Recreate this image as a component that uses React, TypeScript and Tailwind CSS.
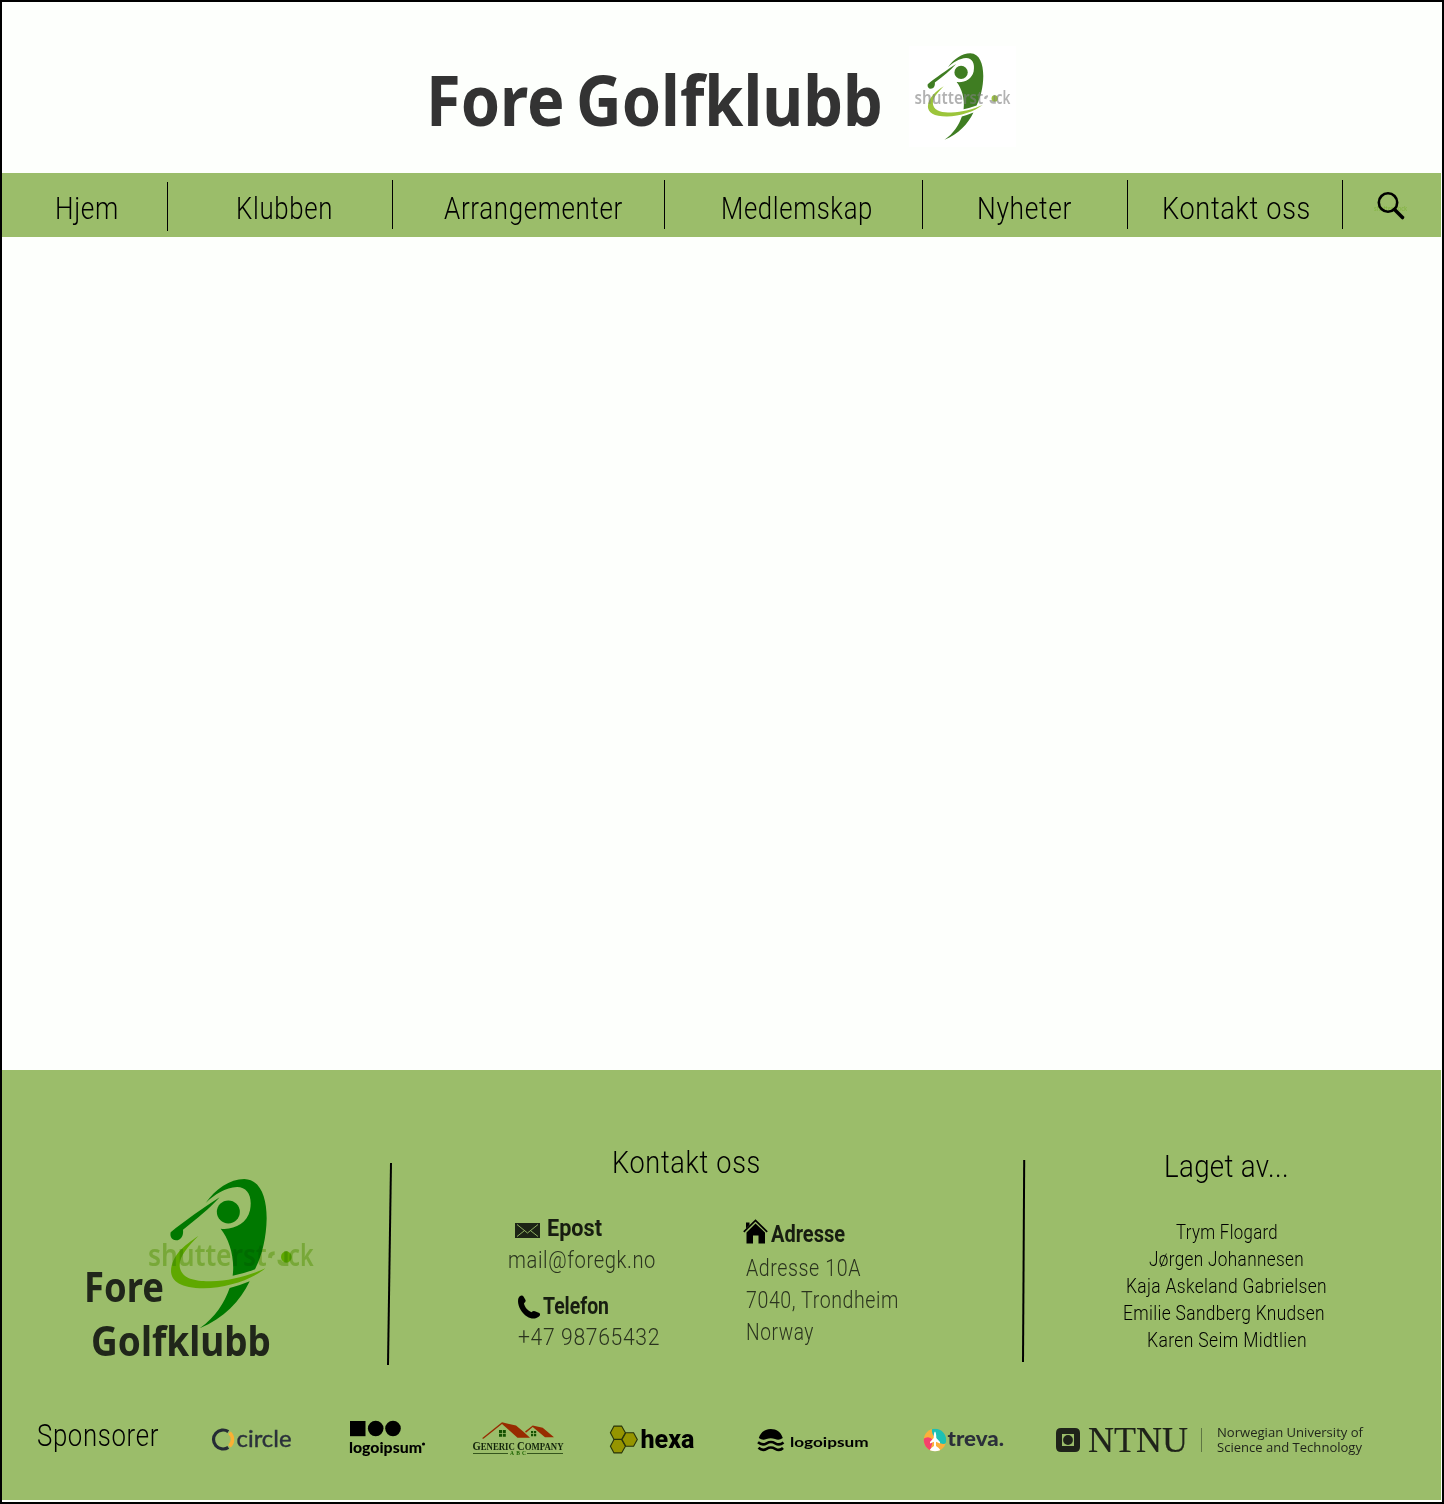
import { useLayoutEffect, useRef, useState, type ReactNode } from "react";

/** One line of text, condensed or widened to fill the width given by its classes. */
function Fit({ className, children }: { className: string; children: ReactNode }) {
  const outer = useRef<HTMLSpanElement>(null);
  const inner = useRef<HTMLSpanElement>(null);
  const [scale, setScale] = useState(1);
  useLayoutEffect(() => {
    if (outer.current && inner.current) {
      setScale(outer.current.clientWidth / inner.current.getBoundingClientRect().width);
    }
  }, []);
  return (
    <span ref={outer} className={`block shrink-0 whitespace-nowrap ${className}`}>
      <span ref={inner} className="inline-block origin-left" style={{ transform: `scaleX(${scale})` }}>
        {children}
      </span>
    </span>
  );
}

type GolferProps = { className: string; body: string; swing: string; markClass: string };

function Golfer({ className, body, swing, markClass }: GolferProps) {
  return (
    <svg viewBox="260 80 500 460" className={`overflow-visible ${className}`}>
      <g fill={body}>
        <path d="M436 158C466 116 508 86 552 86C600 88 619 140 619 204C618 262 606 314 584 357Q550 370 517 376C524 322 507 268 481 235C520 240 560 220 569 180C577 138 562 110 530 110C496 112 462 132 436 158Z" />
        <circle cx="504" cy="185" r="34.500" />
        <path d="M478 141C448 174 414 202 368 238C370 256 362 270 347 270C334 269 328 258 331 246C370 214 430 172 478 141Z" />
        <path d="M508 413Q540 405 568 393C540 452 490 505 418 534C466 500 492 458 508 413Z" />
      </g>
      <path
        fill={swing}
        d="M414 257C380 292 352 322 359 354C368 388 410 393 452 393C510 391 566 376 615 354C574 388 500 412 430 414C362 414 332 392 332 362C334 316 370 286 414 257Z"
      />
      <ellipse cx="678" cy="320" rx="16" ry="17" fill={swing} />
      <g className={markClass} fontFamily="Noto Sans, sans-serif" fontWeight="600" fontSize="92">
        <text x="263" y="347" textLength="356" lengthAdjust="spacingAndGlyphs">
          shutterst
        </text>
        <text x="684" y="347" textLength="76" lengthAdjust="spacingAndGlyphs">
          ck
        </text>
        <path d="M623 322Q623 303 643 303V314Q635 314 635 324Z" />
        <path d="M651 328Q652 347 672 347H684V335H674Q664 335 663 328Z" />
        <rect x="672" y="302" width="10" height="34" />
      </g>
    </svg>
  );
}

function NavItem({ cell, text, label, bar = "mt-[7px]" }: { cell: string; text: string; label: string; bar?: string }) {
  return (
    <li className={`flex h-full shrink-0 justify-between ${cell}`}>
      <a href="#" className="mt-[15px] block">
        <Fit className={`text-[32px] font-[360] leading-10 tracking-[0.025em] ${text}`}>{label}</Fit>
      </a>
      <span className={`h-[49px] w-px bg-black ${bar}`} />
    </li>
  );
}

function Circle() {
  return (
    <svg viewBox="212 1427 80 24" className="ml-[53px] mt-[27px] h-6 w-20 shrink-0 overflow-visible">
      <path d="M228.300 1431.600A9.500 9.500 0 1 0 228.300 1447.400" fill="none" stroke="#252b35" strokeWidth="3.200" />
      <path d="M229.600 1432.700A9.500 9.500 0 0 1 229.600 1446.300" fill="none" stroke="#fbb034" strokeWidth="3.600" />
      <text x="236.500" y="1447" textLength="55" lengthAdjust="spacingAndGlyphs" fill="#2b313b" stroke="#2b313b" strokeWidth="0.400" fontFamily="Lato, sans-serif" fontSize="24">
        circle
      </text>
    </svg>
  );
}

function LogoipsumBlocks() {
  return (
    <svg viewBox="349 1420 77 38" className="ml-[57px] mt-5 h-[38px] w-[77px] shrink-0 overflow-visible">
      <rect x="350" y="1421" width="15.500" height="15.200" />
      <circle cx="375.700" cy="1428.500" r="7.800" />
      <circle cx="393" cy="1428.500" r="7.800" />
      <text x="349" y="1453" textLength="73" lengthAdjust="spacingAndGlyphs" fontFamily="Lato, sans-serif" fontWeight="900" fontSize="14.500">
        logoipsum
      </text>
      <circle cx="423.500" cy="1444" r="1.600" />
    </svg>
  );
}

function GenericCompany() {
  return (
    <svg viewBox="472 1421 92 36" className="ml-[46px] mt-[21px] h-9 w-[92px] shrink-0 overflow-visible">
      <g fill="#982b00">
        <path d="M502 1422.300L516 1425.500L523.500 1431.800L530 1437.700H517.500L502 1424L483.500 1438.800L482 1438.300Z" />
        <path d="M532.700 1425.500L542.700 1427.800L554 1437.200H545L532.700 1427L526 1432.800L525 1431.600Z" />
      </g>
      <path d="M499 1430h3v3h-3zM502.800 1430h3v3h-3zM499 1433.800h3v3h-3zM502.800 1433.800h3v3h-3zM531 1431h2.200v2.200h-2.200zM534 1431h2.200v2.200h-2.200zM531 1434h2.200v2.200h-2.200zM534 1434h2.200v2.200h-2.200z" fill="#145200" />
      <g fontFamily="Liberation Serif, serif" fill="#12240a">
        <text x="472.500" y="1449.500" textLength="91" lengthAdjust="spacingAndGlyphs" fontWeight="700" fontSize="9.500">
          <tspan fontSize="11.500">G</tspan>ENERIC <tspan fontSize="11.500">C</tspan>OMPANY
        </text>
        <text x="510" y="1455.200" textLength="16" fontSize="5.500" fill="#1d6200" fontWeight="700">
          ABC
        </text>
      </g>
      <path d="M473 1453.500H508M527 1453.500H563" stroke="#35551d" strokeWidth="1" />
    </svg>
  );
}

function Hexa() {
  return (
    <svg viewBox="609 1424 86 32" className="ml-[45px] mt-6 h-8 w-[86px] shrink-0 overflow-visible">
      <g fill="#959500" stroke="#26330a" strokeWidth="1.100">
        <path d="M610.400 1432.800L614 1426.100H621.600L625.400 1432.800L621.600 1439.400H614Z" />
        <path d="M610.400 1446.200L614 1439.500H621.600L625.400 1446.200L621.600 1452.900H614Z" />
        <path d="M622 1439.500L625.800 1432.800H633.600L637.300 1439.500L633.600 1446.200H625.800Z" />
      </g>
      <text x="640.500" y="1448" textLength="54" lengthAdjust="spacingAndGlyphs" fontFamily="Roboto, sans-serif" fontWeight="800" fontSize="25.500">
        hexa
      </text>
    </svg>
  );
}

function LogoipsumWaves() {
  return (
    <svg viewBox="757 1428 112 26" className="ml-[62px] mt-7 h-[26px] w-28 shrink-0 overflow-visible">
      <path d="M758.800 1438C761 1432 765 1429 770.800 1429C776.500 1429 781 1432 782.800 1438Q779 1441 775 1439Q770.800 1437.500 766.500 1439Q762.500 1441 758.800 1438Z" />
      <g fill="none" stroke="#000" strokeWidth="2.600">
        <path d="M758 1442.300Q762.300 1445.800 766.600 1443.300T775.200 1443.300T783.500 1442.500" />
        <path d="M758.500 1447.800Q762.500 1451.300 766.600 1448.800T775.200 1448.800T783 1448" />
      </g>
      <text x="790" y="1446.500" textLength="78.500" lengthAdjust="spacingAndGlyphs" fontFamily="Lato, sans-serif" fontWeight="700" fontSize="14">
        logoipsum
      </text>
    </svg>
  );
}

function Treva() {
  return (
    <svg viewBox="923 1428 82 24" className="ml-[54px] mt-7 h-6 w-[82px] shrink-0 overflow-visible">
      <clipPath id="treva-disc">
        <circle cx="935" cy="1440" r="11.200" />
      </clipPath>
      <g clipPath="url(#treva-disc)">
        <rect x="923" y="1428" width="24" height="24" fill="#fbb03b" />
        <path d="M932 1428H947V1443Q940 1446 936 1439Q931 1434 932 1428Z" fill="#1cc0b4" />
        <path d="M923 1439Q929 1435 933 1440L930 1452H923Z" fill="#f4436c" />
        <path d="M935 1431.500Q936.300 1432.500 936.300 1438L940 1442V1443.500L936 1441.800V1446Q939 1447.500 942 1452H928Q931 1447.500 934 1446V1441.800L930 1443.500V1442L933.700 1438Q933.700 1432.500 935 1431.500Z" fill="#fff" />
      </g>
      <text x="947.500" y="1446" textLength="56.500" lengthAdjust="spacingAndGlyphs" fill="#2b2f3a" fontFamily="Lato, sans-serif" fontWeight="900" fontSize="20">
        treva.
      </text>
    </svg>
  );
}

function Ntnu() {
  return (
    <div className="ml-[51px] mt-[23px] flex text-[#1f231a]">
      <svg viewBox="0 0 24 24" className="mt-[5px] size-6 shrink-0" fill="currentColor">
        <path fillRule="evenodd" d="M5 0H19Q24 0 24 5V19Q24 24 19 24H5Q0 24 0 19V5Q0 0 5 0ZM6 6V18H18V6Z" />
        <circle cx="12" cy="12" r="4.900" />
      </svg>
      <Fit className="ml-2 -mt-[3px] h-10 w-[100px] font-['Liberation_Serif',serif] text-[36px] leading-10 [-webkit-text-stroke:0.2px]">NTNU</Fit>
      <span className="ml-[13px] mt-[5px] h-6 w-px bg-[#5f7643]" />
      <div className="ml-[15px] mt-[3px] font-['Open_Sans',sans-serif] text-[12.500px] leading-[14.500px]">
        <Fit className="w-[146px]">Norwegian University of</Fit>
        <Fit className="w-[145px]">Science and Technology</Fit>
      </div>
    </div>
  );
}

export default function App() {
  return (
    <div className="flex h-[1504px] w-[1444px] flex-col overflow-hidden border-2 border-black bg-[#fdfffc] pr-px font-['Roboto',sans-serif] text-black">
      <header className="flex h-[171px] shrink-0 items-start pl-[424px]">
        <h1 className="mt-[57px]">
          <Fit className="w-[457px] font-['Noto_Sans',sans-serif] text-[70px] font-bold leading-[80px] text-[#333] [word-spacing:-0.08em]">Fore Golfklubb</Fit>
        </h1>
        <div className="ml-[26px] mt-11 bg-white px-[5px] py-1.5">
          <Golfer className="h-[89px] w-[96.500px]" body="#3f7d22" swing="#9cc53b" markClass="fill-[#808080] opacity-60" />
        </div>
      </header>

      <nav className="h-16 shrink-0 bg-[#9bbd6a]">
        <ul className="flex h-full">
          <NavItem cell="w-[166px] pl-[53px]" text="w-[64px]" label="Hjem" bar="mt-[9px]" />
          <NavItem cell="w-[225px] pl-[68px]" text="w-[97px]" label="Klubben" />
          <NavItem cell="w-[272px] pl-[51px]" text="w-[179px]" label="Arrangementer" />
          <NavItem cell="w-[258px] pl-[56px]" text="w-[152px]" label="Medlemskap" />
          <NavItem cell="w-[205px] pl-[54px]" text="w-[95px]" label="Nyheter" />
          <NavItem cell="w-[215px] pl-[34px]" text="w-[149px]" label="Kontakt oss" />
          <li className="ml-[31px] mt-[18px]">
            <svg viewBox="0 0 34 30" className="h-[30px] w-[34px] overflow-visible">
              <text x="0" y="20" textLength="33" lengthAdjust="spacingAndGlyphs" fill="#86b545" fontFamily="Open Sans, sans-serif" fontWeight="600" fontSize="7">
                shutterstock
              </text>
              <circle cx="14" cy="11.500" r="9.200" fill="none" stroke="#000" strokeWidth="2.600" />
              <path d="M20.500 18.500L28.500 26.500" stroke="#000" strokeWidth="3.600" strokeLinecap="round" />
            </svg>
          </li>
        </ul>
      </nav>

      <main className="h-[833px] shrink-0" />

      <footer className="h-[430px] shrink-0 bg-[#9bbd6a]">
        <div className="flex h-[330px] items-start">
          <section className="relative w-[384px] pl-[82px] pt-[189px] font-['Noto_Sans',sans-serif] text-[41px] font-bold leading-[54px] text-[#20261a]">
            <Golfer
              className="absolute left-[144.700px] top-[106.700px] h-[153.300px] w-[166.700px]"
              body="#007800"
              swing="#5fa800"
              markClass="fill-[#c6e387] mix-blend-multiply"
            />
            <Fit className="relative w-[80px]">Fore</Fit>
            <Fit className="relative ml-[7px] w-[180px]">Golfklubb</Fit>
          </section>

          <svg viewBox="0 0 6 202" className="mt-[93px] h-[202px] w-1.5 shrink-0">
            <path d="M5 0L2 202" stroke="#000" strokeWidth="2" />
          </svg>

          <section className="w-[629px] pt-[72px]">
            <h2 className="pl-[220px]">
              <Fit className="w-[149px] text-[32px] font-[360] leading-10 tracking-[0.025em]">Kontakt oss</Fit>
            </h2>
            <div className="flex text-2xl leading-8 text-[#2a331e]">
              <div className="w-[234px] pl-[115px] pt-[30px]">
                <div className="flex pl-2">
                  <svg viewBox="0 0 25 15" className="mt-[11px] h-[15px] w-[25px] shrink-0">
                    <rect width="25" height="15" fill="#1c2415" />
                    <path d="M2 1.500L12.500 10L23 1.500M2 13.500L9.500 7.600M23 13.500L15.500 7.600" fill="none" stroke="#9bbd6a" strokeWidth="0.900" />
                  </svg>
                  <Fit className="ml-[7px] w-[55px] font-bold text-[#171d10]">Epost</Fit>
                </div>
                <Fit className="ml-px w-[148px] font-[330] tracking-[0.03em]">mail@foregk.no</Fit>
                <div className="mt-[14px] flex pl-[11px]">
                  <svg viewBox="0 0 22 24" className="mt-[5px] h-6 w-[22px] shrink-0">
                    <path d="M1.500 1.500Q4-.5 5.500 1.500L7.500 5Q8.200 6.800 6 8.300C6.500 12 10 16 13.500 17.200Q15 15.600 17 16.200L21.300 18Q23 19.500 21 21.500C18 24 13.500 24.500 9 21.500C3 17.500-1.500 9 .500 3Z" />
                  </svg>
                  <Fit className="ml-[3px] w-[66px] font-bold text-[#171d10]">Telefon</Fit>
                </div>
                <Fit className="-mt-px ml-[11px] w-[142px] font-[330] tracking-[0.03em]">+47 98765432</Fit>
              </div>
              <div className="pl-[117px] pt-9">
                <div className="flex">
                  <svg viewBox="0 0 25 25" className="mt-px h-[25px] w-[25px] shrink-0">
                    <path d="M.8 12.800L12.500 1.500L24.200 12.800" fill="none" stroke="#000" strokeWidth="1.700" />
                    <path d="M3 3.500H6.500V6L3 9.500ZM12.500 4.500L22 13.500V24.500H15.500V16.500H10V24.500H3.500V13.500Z" />
                  </svg>
                  <Fit className="ml-[3px] w-[74px] font-bold text-[#171d10]">Adresse</Fit>
                </div>
                <div className="ml-[3px] mt-0.5 font-[330] tracking-[0.03em]">
                  <Fit className="w-[115px]">Adresse 10A</Fit>
                  <Fit className="w-[153px]">7040, Trondheim</Fit>
                  <Fit className="w-[68px]">Norway</Fit>
                </div>
              </div>
            </div>
          </section>

          <svg viewBox="0 0 6 202" className="mt-[90px] h-[202px] w-1.5 shrink-0">
            <path d="M3.200 0L2 202" stroke="#000" strokeWidth="2" />
          </svg>

          <section className="flex w-[399px] flex-col items-center pt-[76px] font-[360] tracking-[0.025em]">
            <Fit className="w-[125px] text-[32px] leading-10">Laget av...</Fit>
            <div className="mt-[33px] flex flex-col items-center text-[20.500px] leading-[27px]">
              <Fit className="w-[102px]">Trym Flogard</Fit>
              <Fit className="w-[155px]">Jørgen Johannesen</Fit>
              <Fit className="w-[201px]">Kaja Askeland Gabrielsen</Fit>
              <Fit className="mr-[5px] w-[202px]">Emilie Sandberg Knudsen</Fit>
              <Fit className="w-[160px]">Karen Seim Midtlien</Fit>
            </div>
          </section>
        </div>

        <div className="flex h-[100px] items-start pl-[35px]">
          <Fit className="mt-[15px] w-[122px] text-[32px] font-[360] leading-10 tracking-[0.025em]">Sponsorer</Fit>
          <Circle />
          <LogoipsumBlocks />
          <GenericCompany />
          <Hexa />
          <LogoipsumWaves />
          <Treva />
          <Ntnu />
        </div>
      </footer>
    </div>
  );
}
